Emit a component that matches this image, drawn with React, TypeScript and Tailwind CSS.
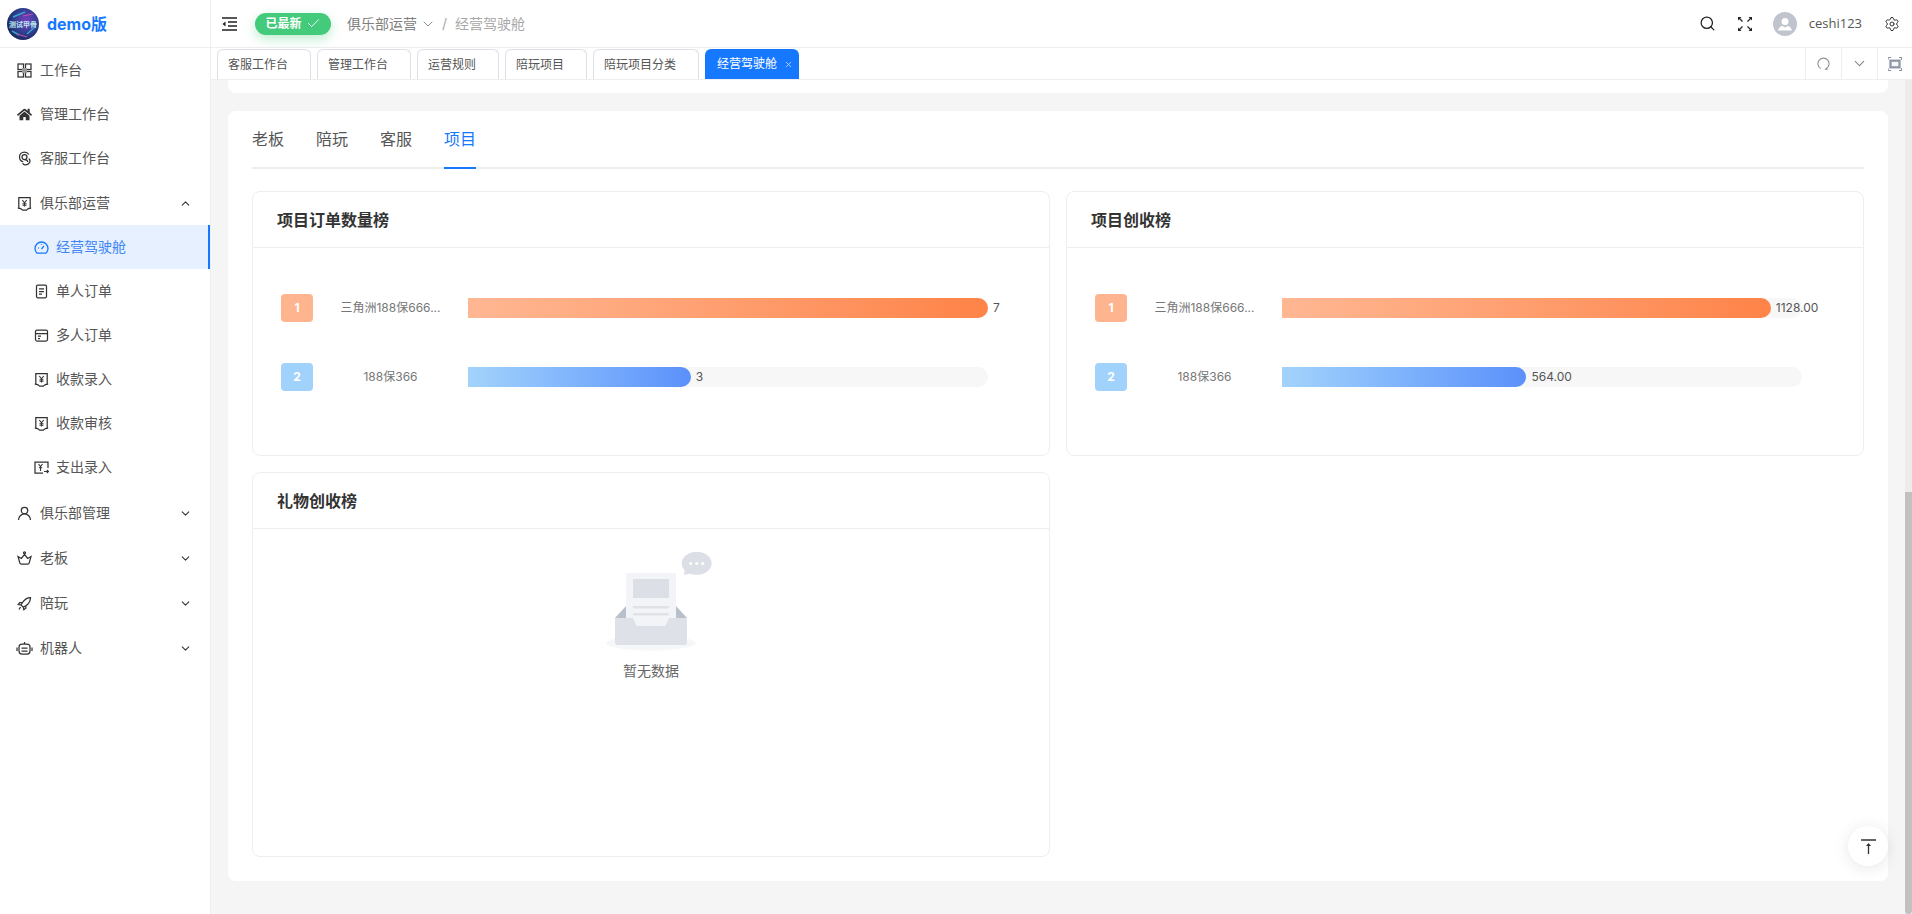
import { ChevronDown, ChevronUp, Check, Search, X, Settings } from "lucide-react";
import { FaHome } from "react-icons/fa";
import type { ReactNode } from "react";

// 菜单图标
const S = "w-[15px] h-[15px] shrink-0 fill-none stroke-[#333] stroke-[1.25]";

function IconGrid() {
  return (
    <svg viewBox="0 0 15 15" className={S}>
      <rect x="1" y="1" width="5.5" height="5.5" />
      <rect x="8.5" y="1" width="5.5" height="5.5" />
      <rect x="1" y="8.5" width="5.5" height="5.5" />
      <rect x="8.5" y="8.5" width="5.5" height="5.5" />
      <rect x="5" y="5" width="5" height="5" fill="#999" stroke="none" />
    </svg>
  );
}
function IconService() {
  return (
    <svg viewBox="0 0 15 15" className={S}>
      <path d="M12 3.500C10.800 1.800 9.300 1 7.500 1 4.500 1 2.500 3.200 2.500 6c0 2.400 1.500 4.200 3.700 4.800" />
      <path d="M11.800 7.500c1.200 1.200 1.400 3 .5 4.400-1 1.500-2.800 2.300-4.500 2-1-.2-1.800-.8-2-1.800" />
      <circle cx="7.500" cy="6" r="2.500" />
      <path d="M7.500 8.500c2 0 3.200 1 3.200 2.500" />
    </svg>
  );
}
function IconShield() {
  return (
    <svg viewBox="0 0 15 15" className={S}>
      <path d="M1.800 12V1.500h11.400V12" />
      <path d="M.8 12.200c2.400 0 3.600.3 4.700 1.800h4c1.100-1.500 2.300-1.800 4.700-1.800" />
      <path d="M5.300 4 7.500 6.800 9.700 4M7.500 6.800v3.700M5.500 7.800h4M5.500 9.300h4" strokeWidth="1.050" />
    </svg>
  );
}
function IconDoc() {
  return (
    <svg viewBox="0 0 15 15" className={S}>
      <rect x="2.500" y="1.200" width="10" height="12.600" rx="1.200" />
      <path d="M5 4.800h5M5 7.500h5M5 10.200h3" />
    </svg>
  );
}
function IconCard() {
  return (
    <svg viewBox="0 0 15 15" className={S}>
      <rect x="1.500" y="2" width="12" height="11" rx="1.500" />
      <path d="M1.500 5.500h12M4 8h3M4 10.500h2" />
    </svg>
  );
}
function IconExpense() {
  return (
    <svg viewBox="0 0 15 15" className={S}>
      <path d="M14 8V2H1v11h8" />
      <path d="M4.500 4 6.500 6.500 8.500 4M6.500 6.500V11M4.800 7.800h3.400" strokeWidth="1.100" />
      <path d="M10 11.500h4.500M12.800 9.800l1.700 1.700-1.700 1.700" strokeWidth="1.100" />
    </svg>
  );
}
function IconUser() {
  return (
    <svg viewBox="0 0 15 15" className={S}>
      <circle cx="7.500" cy="4.500" r="3.200" />
      <path d="M1.500 14c0-3.300 2.700-6 6-6s6 2.700 6 6" />
    </svg>
  );
}
function IconCrown() {
  return (
    <svg viewBox="0 0 15 15" className={S}>
      <circle cx="7.500" cy="1.800" r="1" />
      <path d="M1 5.500 4.300 7.500 7.500 3.500l3.200 4L14 5.500l-1.800 6.300c-.2.800-.8 1.200-1.500 1.200H4.300c-.7 0-1.300-.4-1.500-1.200z" />
    </svg>
  );
}
function IconRocket() {
  return (
    <svg viewBox="0 0 15 15" className={S}>
      <path d="M13.500 1.500c-3.500 0-6 1.800-8 5L4 9l2.300 2.300 2.500-1.500c3-2 4.700-4.800 4.700-8.300z" />
      <path d="M5 6.500H2.700L1.200 8.500l2.800.5M8.800 10v2.200l-2 1.500-.5-2.400M3.500 11l-1.500 2.500" />
    </svg>
  );
}
function IconRobot() {
  return (
    <svg viewBox="0 0 17 15" className="w-[17px] h-[15px] shrink-0 -mx-px fill-none stroke-[#333] stroke-[1.25]">
      <rect x="3" y="3" width="11" height="10" rx="3" />
      <path d="M8.500 1v2M5.500 7h6M5.500 10h6M1 6.500v3.500M16 6.500v3.500" />
    </svg>
  );
}
function IconGauge() {
  return (
    <svg viewBox="0 0 15 15" className="w-[15px] h-[15px] shrink-0 fill-none stroke-[#1677ff] stroke-[1.3]">
      <path d="M3 13.200h9A6.500 6.500 0 1 0 3 13.200z" />
      <path d="M7.500 9 10 5.800M4 8h.8M7.500 4.200v.8" />
    </svg>
  );
}

type MenuItem = { label: string; icon: ReactNode; sub?: boolean; active?: boolean; arrow?: "up" | "down"; gap?: string };

const MENU: MenuItem[] = [
  { label: "工作台", icon: <IconGrid /> },
  { label: "管理工作台", icon: <FaHome className="w-[15px] h-[15px] shrink-0 text-[#333]" /> },
  { label: "客服工作台", icon: <IconService /> },
  { label: "俱乐部运营", icon: <IconShield />, arrow: "up", gap: "mt-px" },
  { label: "经营驾驶舱", icon: <IconGauge />, sub: true, active: true },
  { label: "单人订单", icon: <IconDoc />, sub: true },
  { label: "多人订单", icon: <IconCard />, sub: true },
  { label: "收款录入", icon: <IconShield />, sub: true },
  { label: "收款审核", icon: <IconShield />, sub: true },
  { label: "支出录入", icon: <IconExpense />, sub: true },
  { label: "俱乐部管理", icon: <IconUser />, arrow: "down", gap: "mt-[2px]" },
  { label: "老板", icon: <IconCrown />, arrow: "down", gap: "mt-px" },
  { label: "陪玩", icon: <IconRocket />, arrow: "down", gap: "mt-px" },
  { label: "机器人", icon: <IconRobot />, arrow: "down", gap: "mt-px" },
];

const TABS = ["客服工作台", "管理工作台", "运营规则", "陪玩项目", "陪玩项目分类"];

function Sidebar() {
  return (
    <aside className="w-[211px] shrink-0 h-full bg-white border-r border-[#eeeeee] flex flex-col">
      <div className="h-12 shrink-0 flex items-center pl-[7px] gap-2 border-b border-[#eeeeee]">
        <svg viewBox="0 0 32 32" className="w-8 h-8 shrink-0">
          <defs>
            <radialGradient id="logo" cx="0.6" cy="0.4" r="0.7">
              <stop offset="0" stopColor="#7a3fc0" />
              <stop offset="0.55" stopColor="#2e3f8f" />
              <stop offset="1" stopColor="#16204f" />
            </radialGradient>
          </defs>
          <circle cx="16" cy="16" r="16" fill="url(#logo)" />
          <path d="M6 9 18 4M20 26 29 18M5 23 12 27" stroke="#38a3c9" strokeWidth="1.500" fill="none" />
          <path d="M16 8 26 6M10 26 20 29" stroke="#c04fb0" strokeWidth="1.200" fill="none" />
          <text x="16" y="19" textAnchor="middle" fontSize="7" fontWeight="700" fill="#b9e6ee">测试甲骨</text>
        </svg>
        <span className="text-base font-bold text-[#1677ff]">demo版</span>
      </div>
      <nav className="flex flex-col">
        {MENU.map((m) => (
          <div
            key={m.label}
            className={`h-11 shrink-0 flex items-center text-sm ${m.gap ?? ""} ${m.sub ? "pl-[34px] gap-[7px]" : "pl-[17px] gap-2"} ${
              m.active ? "bg-[#e6f0fe] text-[#3f86f5] border-r-2 border-[#1677ff]" : "text-[#555555]"
            }`}
          >
            {m.icon}
            <span className="flex-1">{m.label}</span>
            {m.arrow === "up" && <ChevronUp className="w-[13px] h-[13px] mr-[18px] text-[#333]" />}
            {m.arrow === "down" && <ChevronDown className="w-[13px] h-[13px] mr-[18px] text-[#333]" />}
          </div>
        ))}
      </nav>
    </aside>
  );
}

function Header() {
  return (
    <header className="h-12 shrink-0 bg-white border-b border-[#eeeeee] flex items-center pl-[11px] pr-[12px]">
      <svg viewBox="0 0 15 14" className="w-[15px] h-[14px] fill-none stroke-[#222] stroke-[1.300]">
        <path d="M0 1h15M6 5h9M6 9h9M0 13h15" />
        <path d="M3.500 4.500v5L.5 7z" fill="#222" stroke="none" />
      </svg>
      <div className="ml-[18px] w-[76px] h-[22px] rounded-full bg-[#43ca7a] flex items-center justify-center gap-1 text-xs font-bold text-white shadow-[0_4px_12px_rgba(67,202,122,0.35)]">
        已最新
        <Check className="w-[15px] h-[15px]" strokeWidth={1.500} />
      </div>
      <span className="ml-4 text-sm text-[#808080]">俱乐部运营</span>
      <ChevronDown className="ml-[3px] w-[16px] h-[16px] text-[#808080]" strokeWidth={1.300} />
      <span className="ml-[6px] text-sm text-[#a8a8a8]">/</span>
      <span className="ml-[8px] text-sm text-[#a8a8a8]">经营驾驶舱</span>
      <div className="ml-auto flex items-center">
        <Search className="w-[17px] h-[17px] text-[#222]" strokeWidth={1.800} />
        <svg viewBox="0 0 14 14" className="ml-[22px] w-[14px] h-[14px] fill-[#222] stroke-[#222] stroke-[1.200]">
          <path d="M1 1l3.500 3.500M13 1 9.500 4.500M1 13l3.500-3.500M13 13 9.500 9.500" />
          <path d="M0 0h3.500L0 3.500zM14 0h-3.500L14 3.500zM0 14v-3.500L3.500 14zM14 14h-3.500l3.500-3.500z" stroke="none" />
        </svg>
        <div className="ml-[21px] w-6 h-6 rounded-full bg-[#c0c4cc] flex items-end justify-center overflow-hidden">
          <svg viewBox="0 0 24 24" className="w-6 h-6 fill-white">
            <circle cx="12" cy="9.500" r="3.500" />
            <path d="M5 18.500c1-3.500 3-4.500 4.500-4.500l2.500 1.500 2.500-1.500c1.500 0 3.500 1 4.500 4.500z" />
          </svg>
        </div>
        <span className="ml-3 text-[13px] font-['Open_Sans',sans-serif] text-[#555555]">ceshi123</span>
        <Settings className="ml-[22px] w-4 h-4 text-[#333]" strokeWidth={1.500} />
      </div>
    </header>
  );
}

function TabBar() {
  return (
    <div className="h-8 shrink-0 bg-white border-b border-[#eeeeee] flex items-end pl-[6px]">
      <div className="flex items-end gap-[6px] h-full">
        {TABS.map((t) => (
          <div
            key={t}
            className="h-[30px] pl-[10px] pr-[22px] flex items-center border border-b-0 border-[#dcdfe6] rounded-t-md text-xs text-[#555555] bg-white"
          >
            {t}
          </div>
        ))}
        <div className="h-[30px] w-[94px] pl-3 flex items-center rounded-t-md text-xs text-white bg-[#1677ff]">
          经营驾驶舱
          <X className="ml-[7px] w-[9px] h-[9px] text-[#d6e6ff]" />
        </div>
      </div>
      <div className="ml-auto flex h-full">
        <div className="w-9 border-l border-[#eeeeee] flex items-center justify-center">
          <svg viewBox="0 0 14 14" className="w-[13px] h-[13px] fill-none stroke-[#909399] stroke-[1.200]">
            <path d="M4 12.400A6 6 0 1 1 10 12.400" />
            <path d="M8.500 13.500 10.500 12.300 11 14" />
          </svg>
        </div>
        <div className="w-9 border-l border-[#eeeeee] flex items-center justify-center">
          <ChevronDown className="w-[17px] h-[17px] text-[#80858f]" strokeWidth={1.500} />
        </div>
        <div className="w-[35px] border-l border-[#eeeeee] flex items-center justify-center">
          <svg viewBox="0 0 14 14" className="w-[14px] h-[14px] fill-none stroke-[#8b93a5] stroke-[1.100]">
            <path d="M0 3V.5h3M11 .5h2.500V3M0 11v2.500h3M11 13.500h2.500V11" />
            <rect x="2" y="3.200" width="10" height="7.600" fill="#a3abb9" stroke="#7d8597" />
            <rect x="3.800" y="5" width="6.400" height="4" fill="#f5f6f8" stroke="none" />
          </svg>
        </div>
      </div>
    </div>
  );
}

type Row = { rank: number; name: string; value: string; pct: number };

function RankBars({ rows }: { rows: Row[] }) {
  return (
    <div className="pt-[46px] pl-[28px] flex flex-col gap-[41px]">
      {rows.map((r) => (
        <div key={r.rank} className="flex items-center h-7">
          <div
            className={`w-8 h-7 rounded flex items-center justify-center text-xs font-bold text-white ${
              r.rank === 1 ? "bg-[#ffb490]" : "bg-[#a1d2fb]"
            }`}
          >
            {r.rank}
          </div>
          <div className="ml-[27px] w-[101px] shrink-0 text-center text-xs text-[#777777] truncate">{r.name}</div>
          <div className="ml-[27px] w-[520px] h-5 bg-[#f7f7f7] rounded-r-full flex items-center">
            <div
              className={`h-5 shrink-0 rounded-r-full ${
                r.rank === 1
                  ? "bg-gradient-to-r from-[#ffb792] to-[#ff8347]"
                  : "bg-gradient-to-r from-[#a3d3fb] to-[#5b90fb]"
              }`}
              style={{ width: `${r.pct}%` }}
            />
            <span className="ml-[5px] shrink-0 text-xs text-[#555555]">{r.value}</span>
          </div>
        </div>
      ))}
    </div>
  );
}

function Card({ title, height, children }: { title: string; height: string; children: ReactNode }) {
  return (
    <div className={`${height} rounded-lg border border-[#eeeeee] bg-white`}>
      <div className="h-14 px-6 flex items-center border-b border-[#eeeeee] text-base font-bold text-[#333333]">
        {title}
      </div>
      {children}
    </div>
  );
}

function EmptyBox() {
  return (
    <div className="pt-[23px] flex flex-col items-center">
      <svg viewBox="0 0 106 100" className="ml-4 w-[106px] h-[100px]">
        <ellipse cx="45" cy="91" rx="45" ry="7.500" fill="#f6f7f9" />
        <path d="M9 66 20 54V70ZM81 66 70 54V70Z" fill="#b8c0ca" />
        <rect x="20" y="21" width="50" height="53" rx="1.500" fill="#f3f4f7" />
        <rect x="27" y="27" width="36" height="19" fill="#dcdfe6" />
        <rect x="27" y="54" width="36" height="2.500" rx="1" fill="#e0e2e8" />
        <rect x="27" y="61" width="36" height="2.500" rx="1" fill="#e0e2e8" />
        <path d="M9 66H27L30 73Q30.500 74 32 74H58Q59.500 74 60 73L63 66H81V90Q81 93 78 93H12Q9 93 9 90Z" fill="#dfe1e8" />
        <ellipse cx="90.700" cy="11.300" rx="15" ry="11.500" fill="#dcdfe6" />
        <path d="M79 15 78 23 86 21Z" fill="#dcdfe6" />
        <circle cx="84.700" cy="11.500" r="1.500" fill="#fff" />
        <circle cx="90.700" cy="11.500" r="1.500" fill="#fff" />
        <circle cx="96.700" cy="11.500" r="1.500" fill="#fff" />
      </svg>
      <span className="mt-[9px] text-sm text-[#666666]">暂无数据</span>
    </div>
  );
}

export default function App() {
  return (
    <div className="w-[1912px] h-[914px] overflow-hidden flex bg-white font-['Inter','Noto_Sans_CJK_SC',sans-serif]">
      <Sidebar />
      <div className="flex-1 min-w-0 flex flex-col h-full">
        <Header />
        <TabBar />
        <div className="flex-1 min-h-0 flex bg-[#f5f5f5] relative">
          <main className="flex-1 min-w-0 px-[17px]">
            <div className="h-[13px] bg-white rounded-b-lg" />
            <section className="mt-[18px] h-[770px] bg-white rounded-lg px-6">
              <div className="h-[58px] flex items-center gap-8 border-b-2 border-[#eeeeee] text-base text-[#555555]">
                <span>老板</span>
                <span>陪玩</span>
                <span>客服</span>
                <span className="relative h-full flex items-center text-[#1677ff]">
                  项目
                  <span className="absolute -bottom-[2px] left-0 right-0 h-[2px] bg-[#1677ff]" />
                </span>
              </div>
              <div className="mt-[22px] grid grid-cols-2 gap-4">
                <Card title="项目订单数量榜" height="h-[265px]">
                  <RankBars
                    rows={[
                      { rank: 1, name: "三角洲188保666...", value: "7", pct: 100 },
                      { rank: 2, name: "188保366", value: "3", pct: 42.86 },
                    ]}
                  />
                </Card>
                <Card title="项目创收榜" height="h-[265px]">
                  <RankBars
                    rows={[
                      { rank: 1, name: "三角洲188保666...", value: "1128.00", pct: 94 },
                      { rank: 2, name: "188保366", value: "564.00", pct: 47 },
                    ]}
                  />
                </Card>
                <Card title="礼物创收榜" height="h-[385px]">
                  <EmptyBox />
                </Card>
              </div>
            </section>
          </main>
          {/* 滚动条 */}
          <div className="w-[7px] shrink-0 bg-[#ececec] flex flex-col justify-end">
            <div className="h-[422px] bg-[#c1c1c1] rounded-b-sm" />
          </div>
          <button className="absolute right-6 bottom-12 w-10 h-10 rounded-full bg-white shadow-[0_2px_16px_rgba(0,0,0,0.1)] flex items-center justify-center">
            <svg viewBox="0 0 15 15" className="w-[15px] h-[15px] fill-none stroke-[#333] stroke-[1.300]">
              <path d="M0 1h15M7.500 15V5" />
              <path d="M5 7l2.500-3L10 7z" fill="#333" stroke="none" />
            </svg>
          </button>
        </div>
      </div>
    </div>
  );
}
